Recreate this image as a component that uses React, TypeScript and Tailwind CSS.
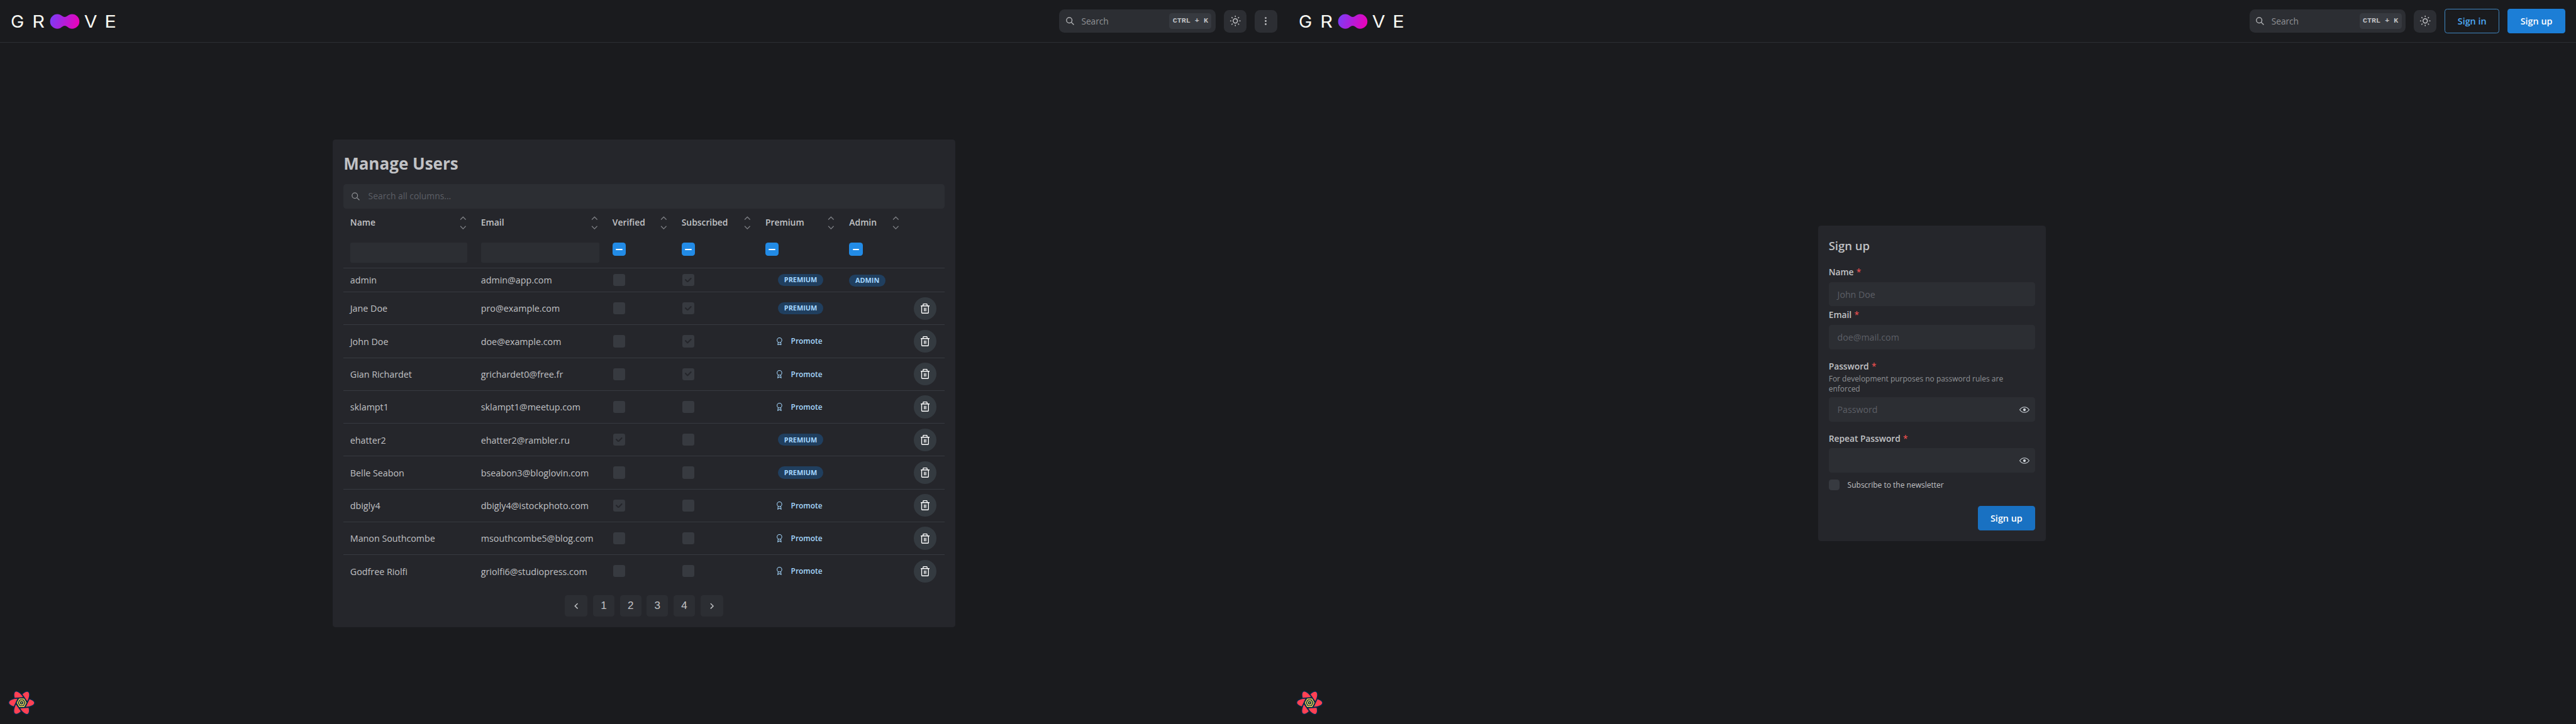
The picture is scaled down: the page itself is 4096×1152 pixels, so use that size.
import React from 'react';
import { TbSearch, TbSun, TbDotsVertical } from 'react-icons/tb';

type User = {
  name: string;
  email: string;
  verified: boolean;
  subscribed: boolean;
  premium: boolean;
  admin?: boolean;
};

const users: User[] = [
  { name: 'admin', email: 'admin@app.com', verified: false, subscribed: true, premium: true, admin: true },
  { name: 'Jane Doe', email: 'pro@example.com', verified: false, subscribed: true, premium: true },
  { name: 'John Doe', email: 'doe@example.com', verified: false, subscribed: true, premium: false },
  { name: 'Gian Richardet', email: 'grichardet0@free.fr', verified: false, subscribed: true, premium: false },
  { name: 'sklampt1', email: 'sklampt1@meetup.com', verified: false, subscribed: false, premium: false },
  { name: 'ehatter2', email: 'ehatter2@rambler.ru', verified: true, subscribed: false, premium: true },
  { name: 'Belle Seabon', email: 'bseabon3@bloglovin.com', verified: false, subscribed: false, premium: true },
  { name: 'dbigly4', email: 'dbigly4@istockphoto.com', verified: true, subscribed: false, premium: false },
  { name: 'Manon Southcombe', email: 'msouthcombe5@blog.com', verified: false, subscribed: false, premium: false },
  { name: 'Godfree Riolfi', email: 'griolfi6@studiopress.com', verified: false, subscribed: false, premium: false },
];

const columns = ['Name', 'Email', 'Verified', 'Subscribed', 'Premium', 'Admin'];
const rowGrid = 'grid grid-cols-[195px_196px_103px_125px_125px_96px_56px]';

function Logo({ id }: { id: string }) {
  return (
    <svg width="180" height="64" viewBox="0 0 360 128" className="block">
      <defs>
        <linearGradient id={id} x1="150" y1="52" x2="236" y2="78" gradientUnits="userSpaceOnUse">
          <stop offset="0" stopColor="#7c3cf6" />
          <stop offset="0.5" stopColor="#b51cd8" />
          <stop offset="1" stopColor="#ee00b6" />
        </linearGradient>
      </defs>
      <g fill="#f8f8f2" fontFamily="Inter, sans-serif" fontSize="51.5" textAnchor="middle">
        <text x="52" y="83.3" textLength="40" lengthAdjust="spacingAndGlyphs">G</text>
        <text x="114.5" y="83.3" textLength="37" lengthAdjust="spacingAndGlyphs">R</text>
        <text x="270.5" y="83.3" textLength="39" lengthAdjust="spacingAndGlyphs">V</text>
        <text x="329" y="83.3" textLength="35" lengthAdjust="spacingAndGlyphs">E</text>
      </g>
      <path
        fill={`url(#${id})`}
        d="M171 42.3C183 42.3 185 50.7 193 50.7S203 42.3 215 42.3A21.7 21.7 0 0 1 215 85.7C203 85.7 201 77 193 77S183 85.7 171 85.7A21.7 21.7 0 0 1 171 42.3Z"
      />
    </svg>
  );
}

function Flower() {
  const petal = 'M38 36L70 -31C96 -23 112 -12 112 2C112 19 78 35 38 36Z';
  const angles = [0, 60, 120, 180, 240, 300];
  return (
    <svg
      width="42"
      height="38"
      viewBox="-126 -114 252 228"
      className="absolute bottom-[13px] left-[11px]"
      strokeLinejoin="round"
    >
      <g fill="#002c4b" stroke="#002c4b" strokeWidth="16">
        {angles.map((a) => (
          <path key={a} d={petal} transform={`rotate(${a})`} />
        ))}
        <circle r="46" />
      </g>
      <g fill="#ff4154">
        {angles.map((a) => (
          <path key={a} d={petal} transform={`rotate(${a})`} />
        ))}
      </g>
      <polygon points="45,0 22.5,39 -22.5,39 -45,0 -22.5,-39 22.5,-39" fill="#002c4b" />
      <g fill="none" stroke="#ffd94c" strokeWidth="8">
        <polygon points="39,0 19.5,34 -19.5,34 -39,0 -19.5,-34 19.5,-34" />
        <polygon points="21,0 10.5,18.5 -10.5,18.5 -21,0 -10.5,-18.5 10.5,-18.5" />
      </g>
      <circle r="5.5" fill="#ffd94c" />
    </svg>
  );
}

function IconButton({ children }: { children: React.ReactNode }) {
  return (
    <button className="flex size-[34px] items-center justify-center rounded-lg bg-[#2c2e33] text-[#c1c2c5]">
      {children}
    </button>
  );
}

function Header({ id, children }: { id: string; children: React.ReactNode }) {
  return (
    <header className="flex h-16 shrink-0 items-center justify-between border-b border-[#2c2e33] pr-4">
      <Logo id={id} />
      <div className="flex items-center gap-3">
        <div className="flex h-[35px] w-[233px] items-center rounded-lg bg-[#2c2e33] pr-[6px] pl-[9px]">
          <TbSearch size={14} className="text-[#c1c2c5]" />
          <span className="ml-[10px] flex-1 pt-px text-[13px] tracking-[-0.1px] text-[#909296]">Search</span>
          <kbd className="flex h-[23px] w-[63px] items-center justify-center rounded bg-[#373a40] font-['Liberation_Mono',monospace] text-[11px] font-bold whitespace-pre text-[#c1c2c5]">
            CTRL + K
          </kbd>
        </div>
        {children}
      </div>
    </header>
  );
}

function Screen({ id, actions, children }: { id: string; actions: React.ReactNode; children: React.ReactNode }) {
  return (
    <section className="relative flex h-[1080px] w-[1920px] flex-col">
      <Header id={id}>{actions}</Header>
      <main className="flex flex-1 items-center justify-center">{children}</main>
      <Flower />
    </section>
  );
}

function SortIcon() {
  return (
    <svg width="10" height="20" viewBox="0 0 10 20" fill="none" stroke="#7d7f84" strokeWidth="1.2">
      <path d="M1 5.2L5 1.1L9 5.2M1 14.8L5 18.9L9 14.8" />
    </svg>
  );
}

function Checkbox({ checked }: { checked: boolean }) {
  return (
    <span className="ml-px flex size-[18px] items-center justify-center rounded-[3px] bg-[#373a40]">
      {checked && (
        <svg width="10" height="7" viewBox="0 0 10 7" fill="#25262b">
          <path d="M4 4.586L1.707 2.293A1 1 0 1 0 .293 3.707l3 3a.997.997 0 0 0 1.414 0l5-5A1 1 0 1 0 8.293.293L4 4.586z" />
        </svg>
      )}
    </span>
  );
}

function IndeterminateCheckbox() {
  return (
    <span className="flex size-5 items-center justify-center rounded bg-[#228be6]">
      <span className="h-[2px] w-[10px] rounded-full bg-white" />
    </span>
  );
}

function Badge({ width, children }: { width: string; children: React.ReactNode }) {
  return (
    <span
      className={`flex h-[18px] items-center justify-center rounded-full bg-[#203f5f] text-[10.2px] font-bold text-[#a5d8ff] ${width}`}
    >
      {children}
    </span>
  );
}

function Promote() {
  return (
    <button className="ml-[15px] flex items-center gap-[11px] text-[11.2px] font-semibold text-[#a5d8ff]">
      <svg width="12" height="12" viewBox="0 0 24 24" fill="none" stroke="currentColor" strokeWidth="1.9">
        <circle cx="12" cy="8" r="7" />
        <path d="M8.21 13.89L7 23l5-3 5 3-1.21-9.12" />
      </svg>
      <span className="pt-px">Promote</span>
    </button>
  );
}

function TrashButton() {
  return (
    <button className="flex size-[34px] items-center justify-center rounded-full bg-[#343a40] text-white">
      <svg width="13.4" height="15" viewBox="0 0 18 20.2" fill="none" stroke="currentColor" strokeWidth="1.7" strokeLinecap="round">
        <path d="M0.8 4.7H17.2M4.8 4.4V2.2Q4.8 0.8 6.2 0.8H11.4Q12.8 0.8 12.8 2.2V4.4" />
        <path d="M1.9 4.7V18Q1.9 19.3 3.2 19.3H14.2Q15.5 19.3 15.5 18V4.7" />
        <path d="M7.3 8.4V15.4M10.3 8.4V15.4" strokeLinecap="butt" />
      </svg>
    </button>
  );
}

function UserRow({ user, last }: { user: User; last: boolean }) {
  return (
    <div
      className={`${rowGrid} items-center text-[13.4px] *:px-[10px] ${user.admin ? 'h-9' : last ? 'h-12' : 'h-[49px]'} ${
        last ? '' : 'border-b border-[#373a40]'
      }`}
    >
      <div className="pt-px">{user.name}</div>
      <div className="pt-px whitespace-nowrap">{user.email}</div>
      <div>
        <Checkbox checked={user.verified} />
      </div>
      <div>
        <Checkbox checked={user.subscribed} />
      </div>
      <div>
        {user.premium ? (
          <div className="flex justify-center">
            <Badge width="w-[67px]">PREMIUM</Badge>
          </div>
        ) : (
          <Promote />
        )}
      </div>
      <div>
        {user.admin && (
          <div className="pt-[2px]">
            <Badge width="w-[54px]">ADMIN</Badge>
          </div>
        )}
      </div>
      <div>{!user.admin && <TrashButton />}</div>
    </div>
  );
}

function Pagination() {
  return (
    <nav className="mt-3 flex justify-center gap-2 font-['Liberation_Sans',sans-serif] text-base">
      <button className="flex h-8 w-[34px] items-center justify-center rounded bg-[#2c2e33]">
        <svg width="6" height="10" viewBox="0 0 6 10" fill="none" stroke="currentColor" strokeWidth="1.4">
          <path d="M5.2 1.2L1.2 5L5.2 8.8" />
        </svg>
      </button>
      {[1, 2, 3, 4].map((n) => (
        <button key={n} className="flex size-8 items-center justify-center rounded bg-[#2c2e33]">
          {n}
        </button>
      ))}
      <button className="flex h-8 w-[34px] items-center justify-center rounded bg-[#2c2e33]">
        <svg width="6" height="10" viewBox="0 0 6 10" fill="none" stroke="currentColor" strokeWidth="1.4">
          <path d="M0.8 1.2L4.8 5L0.8 8.8" />
        </svg>
      </button>
    </nav>
  );
}

function ManageUsers() {
  return (
    <div className="flex h-[728px] w-[928px] flex-col rounded bg-[#25262b] px-4">
      <h2 className="flex h-[66px] items-center pt-[5px] text-[24.4px] leading-none font-bold">Manage Users</h2>
      <div className="mt-px flex h-9 shrink-0 items-center rounded bg-[#2c2e33] pl-[11px]">
        <TbSearch size={14} className="text-[#909296]" />
        <span className="ml-3 text-[13px] text-[#5c5f66]">Search all columns...</span>
      </div>
      <div className={`${rowGrid} h-[43px] shrink-0 items-center text-[13px] font-semibold`}>
        {columns.map((c) => (
          <div key={c} className="flex items-center justify-between pr-3 pl-[10px]">
            <span>{c}</span>
            <SortIcon />
          </div>
        ))}
      </div>
      <div className={`${rowGrid} h-[46px] shrink-0 border-b border-[#373a40] pt-2 *:px-[10px]`}>
        <div>
          <div className="h-[30px] rounded-xs bg-[#2c2e33]" />
        </div>
        <div>
          <div className="h-[30px] rounded-xs bg-[#2c2e33]" />
        </div>
        {[0, 1, 2, 3].map((i) => (
          <div key={i}>
            <IndeterminateCheckbox />
          </div>
        ))}
      </div>
      {users.map((u, i) => (
        <UserRow key={u.email} user={u} last={i === users.length - 1} />
      ))}
      <Pagination />
    </div>
  );
}

function EyeIcon() {
  return (
    <svg width="15" height="15" viewBox="0 0 15 15" fill="#ced4da">
      <path
        fillRule="evenodd"
        d="M7.5 11C4.80285 11 2.52952 9.62184 1.09622 7.50001C2.52952 5.37816 4.80285 4 7.5 4C10.1971 4 12.4705 5.37816 13.9038 7.50001C12.4705 9.62183 10.1971 11 7.5 11ZM7.5 3C4.30786 3 1.65639 4.70638 0.0760002 7.23501C-0.0253338 7.39715 -0.0253334 7.60288 0.0760014 7.76501C1.65639 10.2936 4.30786 12 7.5 12C10.6921 12 13.3436 10.2936 14.924 7.76501C15.0253 7.60288 15.0253 7.39715 14.924 7.23501C13.3436 4.70638 10.6921 3 7.5 3ZM7.5 9.5C8.60457 9.5 9.5 8.60457 9.5 7.5C9.5 6.39543 8.60457 5.5 7.5 5.5C6.39543 5.5 5.5 6.39543 5.5 7.5C5.5 8.60457 6.39543 9.5 7.5 9.5Z"
      />
    </svg>
  );
}

function Label({ children }: { children: React.ReactNode }) {
  return (
    <div className="flex h-[22px] items-center pt-px text-[12.9px] font-semibold">
      {children}
      <span className="ml-1 font-medium text-[#fa5252]">*</span>
    </div>
  );
}

function Input({ placeholder, eye }: { placeholder?: string; eye?: boolean }) {
  return (
    <div className="flex h-9 items-center justify-between rounded bg-[#2c2e33] pr-[9px] pl-[13px] text-[13.3px] text-[#5c5f66]">
      <span>{placeholder}</span>
      {eye && <EyeIcon />}
    </div>
  );
}

function SignUp() {
  return (
    <form className="flex h-[470px] w-[340px] flex-col rounded bg-[#25262b] px-4">
      <h3 className="mt-4 flex h-7 items-center text-[17.3px] leading-none font-semibold">Sign up</h3>
      <div className="mt-[14px]">
        <Label>Name</Label>
        <div className="mt-1">
          <Input placeholder="John Doe" />
        </div>
      </div>
      <div className="mt-[2px]">
        <Label>Email</Label>
        <div className="mt-1">
          <Input placeholder="doe@mail.com" />
        </div>
      </div>
      <div className="mt-[14px]">
        <Label>Password</Label>
        <p className="mt-px h-[30px] text-[11.23px] leading-[15px] text-[#909296]">
          For development purposes no password rules are enforced
        </p>
        <div className="mt-[5px]">
          <Input placeholder="Password" eye />
        </div>
      </div>
      <div className="mt-[14px]">
        <Label>Repeat Password</Label>
        <div className="mt-1">
          <Input eye />
        </div>
      </div>
      <div className="mt-[10px] flex h-4 items-center">
        <span className="size-4 rounded bg-[#373a40]" />
        <span className="ml-3 pt-[2px] text-[11.25px]">Subscribe to the newsletter</span>
      </div>
      <button
        type="button"
        className="mt-6 flex h-9 w-[86px] items-center justify-center self-end rounded bg-[#1971c2] text-[13.5px] font-semibold text-white"
      >
        Sign up
      </button>
    </form>
  );
}

export default function App() {
  return (
    <div className="flex h-[1080px] w-[3840px] overflow-hidden bg-[#1a1b1e] font-['Open_Sans','Noto_Sans',sans-serif] text-[#c1c2c5] [zoom:1.0666667]">
      <Screen
        id="logo-users"
        actions={
          <>
            <IconButton>
              <TbSun size={19.2} strokeWidth={1.8} />
            </IconButton>
            <IconButton>
              <TbDotsVertical size={16} />
            </IconButton>
          </>
        }
      >
        <ManageUsers />
      </Screen>
      <Screen
        id="logo-signup"
        actions={
          <>
            <IconButton>
              <TbSun size={19.2} strokeWidth={1.8} />
            </IconButton>
            <button className="flex h-9 w-[82px] items-center justify-center rounded border border-[#3f86c0] text-[13.5px] font-semibold text-[#4dabf7]">
              Sign in
            </button>
            <button className="flex h-9 w-[86px] items-center justify-center rounded bg-[#1c7ed6] text-[13.5px] font-semibold text-white">
              Sign up
            </button>
          </>
        }
      >
        <SignUp />
      </Screen>
    </div>
  );
}
